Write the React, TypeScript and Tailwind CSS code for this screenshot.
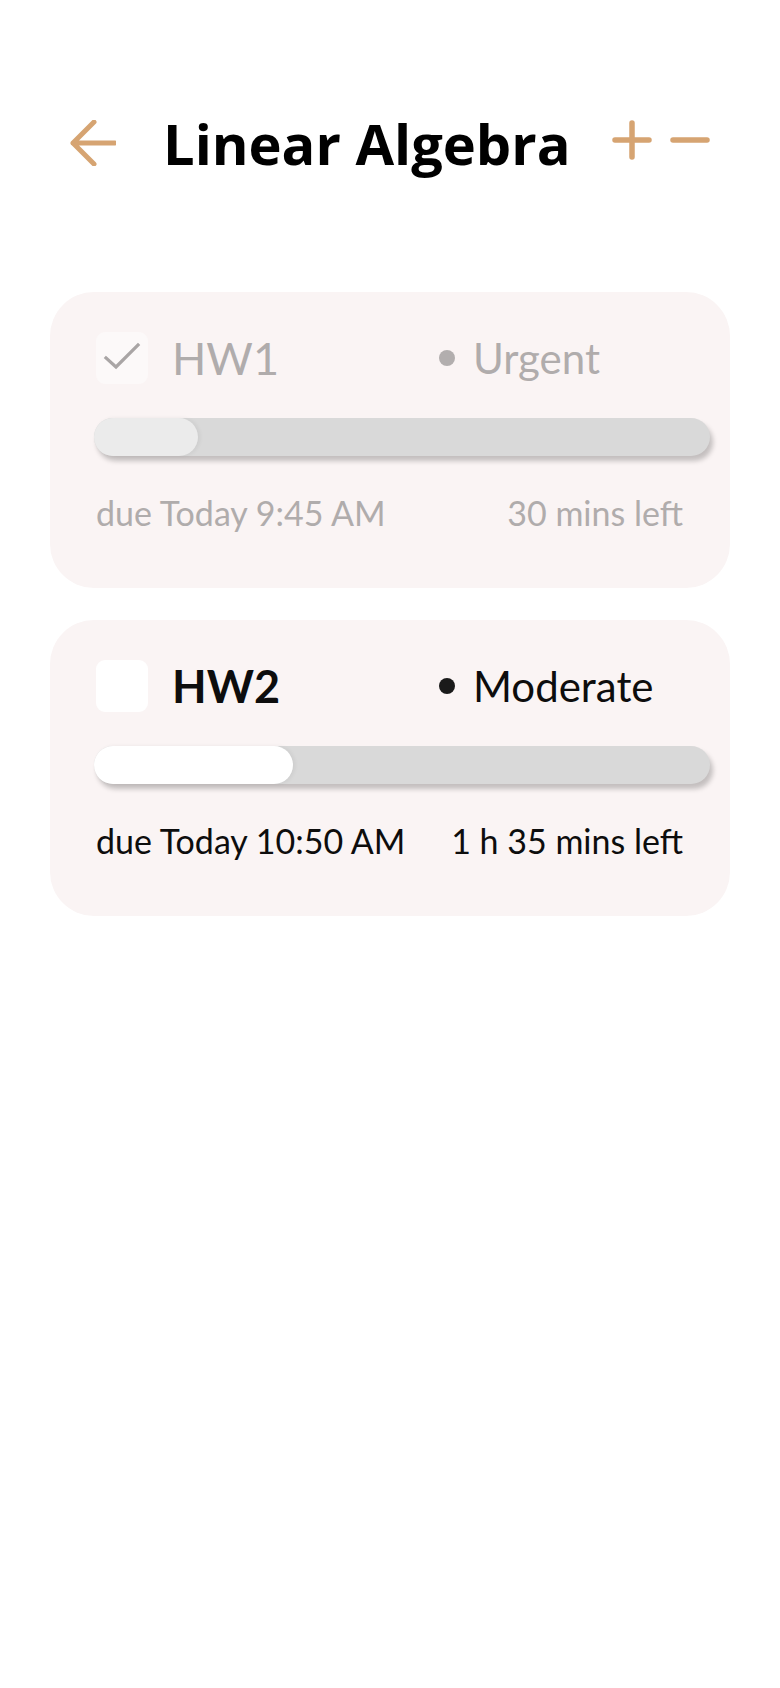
import React from "react";

type Task = {
  name: string;
  priority: string;
  due: string;
  left: string;
  done: boolean;
  progress: number;
};

const tasks: Task[] = [
  { name: "HW1", priority: "Urgent", due: "due Today 9:45 AM", left: "30 mins left", done: true, progress: 104 },
  { name: "HW2", priority: "Moderate", due: "due Today 10:50 AM", left: "1 h 35 mins left", done: false, progress: 199 },
];

function Card({ t }: { t: Task }) {
  const textColor = t.done ? "text-[#b0acac]" : "text-[#0d0d0d]";
  return (
    <div className="h-[296px] rounded-[44px] bg-[#faf4f4] pl-[46px] pr-[47px] pt-[40px]">
      <div className="flex h-[52px] items-center">
        <div className="flex w-[343px] items-center">
          <div
            className={
              "flex h-[52px] w-[52px] items-center justify-center rounded-[9px] " +
              (t.done ? "bg-[#fcf9f9]" : "bg-white")
            }
          >
            {t.done && (
              <svg width="52" height="52" viewBox="0 0 52 52">
                <path d="M10 38 L20 47 L42 25" transform="translate(0,-12)" fill="none" stroke="#a9a5a5" strokeWidth="3.2" strokeLinecap="square" />
              </svg>
            )}
          </div>
          <span
            className={
              "ml-[24px] text-[45px] leading-[52px] " +
              textColor +
              (t.done ? " font-normal" : " font-bold")
            }
            style={{ fontFamily: "Lato, sans-serif" }}
          >
            {t.name}
          </span>
        </div>
        <div className={"h-[16px] w-[16px] rounded-full " + (t.done ? "bg-[#b2aeae]" : "bg-[#1a1a1a]")} />
        <span
          className={"ml-[18px] text-[42px] leading-[52px] " + textColor}
          style={{ fontFamily: "Lato, sans-serif" }}
        >
          {t.priority}
        </span>
      </div>
      <div className="ml-[-2px] mt-[34px] h-[38px] w-[616px] rounded-full bg-[#d9d9d9] shadow-[3px_5px_5px_rgba(0,0,0,0.22)]">
        <div
          className={
            "h-[38px] rounded-full shadow-[2px_0_4px_rgba(0,0,0,0.06)] " + (t.done ? "bg-[#ebebeb]" : "bg-white")
          }
          style={{ width: t.progress + "px" }}
        />
      </div>
      <div
        className={"mt-[37px] flex justify-between text-[34px] leading-[40px] " + textColor}
        style={{ fontFamily: "Lato, sans-serif" }}
      >
        <span>{t.due}</span>
        <span>{t.left}</span>
      </div>
    </div>
  );
}

export default function App() {
  return (
    <div className="min-h-[1688px] w-[780px] bg-white pt-[120px]">
      <div className="flex h-[46px] items-center pl-[70px] pr-[70px]">
        <svg width="46" height="46" viewBox="0 0 46 46" className="shrink-0">
          <path d="M3 23 H45 M24 2 L3 23 L24 44" fill="none" stroke="#d6a472" strokeWidth="5" strokeLinecap="round" strokeLinejoin="round" />
        </svg>
        <h1
          className="ml-[47px] text-[56px] font-bold leading-[46px] text-black"
          style={{ fontFamily: "'Open Sans', sans-serif" }}
        >
          Linear Algebra
        </h1>
        <div className="ml-auto flex items-center gap-[18px] self-start">
          <svg width="40" height="40" viewBox="0 0 40 40">
            <path d="M3 20 H37 M20 3 V37" fill="none" stroke="#d6a472" strokeWidth="5.5" strokeLinecap="round" />
          </svg>
          <svg width="40" height="40" viewBox="0 0 40 40">
            <path d="M3 20 H37" fill="none" stroke="#d6a472" strokeWidth="5.5" strokeLinecap="round" />
          </svg>
        </div>
      </div>
      <div className="mt-[126px] flex flex-col gap-[32px] px-[50px]">
        {tasks.map((t) => (
          <Card key={t.name} t={t} />
        ))}
      </div>
    </div>
  );
}
